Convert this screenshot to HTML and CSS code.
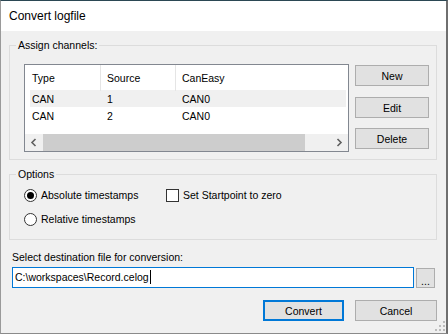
FILE: index.html
```html
<!DOCTYPE html>
<html lang="en">
<head>
<meta charset="UTF-8">
<meta name="viewport" content="width=device-width, initial-scale=1.0">
<title>Convert logfile</title>
<link rel="stylesheet" href="styles.css">
</head>
<body>
    <div class="window">
        <div class="titlebar">Convert logfile</div>

        <div class="content">
            <fieldset class="group">
                <legend>Assign channels:</legend>
                <div class="group-body channels">
                    <div class="listview">
                        <div class="lv-head">
                            <div class="cell c1">Type</div>
                            <div class="cell c2">Source</div>
                            <div class="cell c3">CanEasy</div>
                        </div>
                        <div class="lv-row hot">
                            <div class="cell c1">CAN</div>
                            <div class="cell c2">1</div>
                            <div class="cell c3">CAN0</div>
                        </div>
                        <div class="lv-row">
                            <div class="cell c1">CAN</div>
                            <div class="cell c2">2</div>
                            <div class="cell c3">CAN0</div>
                        </div>
                        <div class="lv-fill"></div>
                        <div class="hscroll">
                            <span class="sb-arrow">
                                <svg width="17" height="17" viewBox="0 0 17 17"><path d="M10.5 5 L7 8.5 L10.5 12" fill="none" stroke="#606060" stroke-width="1.6"/></svg>
                            </span>
                            <span class="sb-thumb"></span>
                            <span class="sb-track"></span>
                            <span class="sb-arrow">
                                <svg width="17" height="17" viewBox="0 0 17 17"><path d="M6.5 5 L10 8.5 L6.5 12" fill="none" stroke="#606060" stroke-width="1.6"/></svg>
                            </span>
                        </div>
                    </div>
                    <div class="side-buttons">
                        <button class="btn">New</button>
                        <button class="btn">Edit</button>
                        <button class="btn">Delete</button>
                    </div>
                </div>
            </fieldset>

            <fieldset class="group group-options">
                <legend>Options</legend>
                <div class="group-body options">
                    <label class="opt"><span class="radio checked"></span>Absolute timestamps</label>
                    <label class="opt"><span class="checkbox"></span>Set Startpoint to zero</label>
                    <label class="opt"><span class="radio"></span>Relative timestamps</label>
                </div>
            </fieldset>

            <div class="dest-label">Select destination file for conversion:</div>
            <div class="dest-row">
                <div class="textbox">C:\workspaces\Record.celog<span class="caret"></span></div>
                <button class="btn btn-browse">...</button>
            </div>

            <div class="footer">
                <button class="btn btn-default">Convert</button>
                <button class="btn btn-cancel">Cancel</button>
            </div>
        </div>

        <svg class="grip" width="10" height="10" viewBox="0 0 10 10">
            <rect x="8" y="0" width="2" height="2" fill="#bcbcbc"/>
            <rect x="4" y="4" width="2" height="2" fill="#bcbcbc"/>
            <rect x="8" y="4" width="2" height="2" fill="#bcbcbc"/>
            <rect x="0" y="8" width="2" height="2" fill="#bcbcbc"/>
            <rect x="4" y="8" width="2" height="2" fill="#bcbcbc"/>
            <rect x="8" y="8" width="2" height="2" fill="#bcbcbc"/>
        </svg>
    </div>
</body>
</html>
```

FILE: styles.css
```css
body {
    margin: 0;
    padding: 0;
    font-family: "Liberation Sans", Arial, sans-serif;
    font-size: 10.5px;
    color: #000;
    background-color: #f0f0f0;
}
.window {
    position: relative;
    width: 448px;
    height: 334px;
    box-sizing: border-box;
    background-color: #f0f0f0;
    border-top: 1px solid #2b4753;
    border-left: 1px solid #9a9a9a;
    border-right: 2px solid #6f6f6f;
    border-bottom: 1px solid #8a8a8a;
}
.titlebar {
    height: 30px;
    line-height: 31px;
    padding-left: 8px;
    background-color: #fff;
    font-size: 12px;
}
.content {
    padding: 0 9px 0 8px;
}
.group {
    margin: 7px 0 0 0;
    padding: 0;
    border: 1px solid #dcdcdc;
    min-width: 0;
}
.group legend {
    margin-left: 6px;
    padding: 0 2px;
    line-height: 14px;
}
.group-body {
    padding: 12px 7px 7px 14px;
}
.channels {
    display: flex;
    gap: 6px;
}
.listview {
    width: 323px;
    border: 1px solid #828790;
    background-color: #fff;
}
.lv-head, .lv-row {
    display: grid;
    grid-template-columns: 70px 75px 1fr;
    margin: 0 2px 0 5px;
}
.lv-head {
    height: 25px;
    line-height: 26px;
}
.lv-head .c2, .lv-head .c3 {
    border-left: 1px solid #e5e5e5;
    padding-left: 6px;
}
.lv-row {
    height: 17px;
    line-height: 18px;
}
.lv-row.hot {
    background-color: #f0f0f0;
}
.cell.c1 {
    padding-left: 2px;
}
.lv-row .c2, .lv-row .c3 {
    padding-left: 7px;
}
.lv-fill {
    height: 10px;
}
.hscroll {
    display: flex;
    height: 17px;
    background-color: #f0f0f0;
}
.sb-arrow {
    width: 17px;
    height: 17px;
}
.sb-arrow svg {
    display: block;
}
.sb-thumb {
    width: 262px;
    margin: 0 0 0 1px;
    background-color: #cdcdcd;
}
.sb-track {
    flex: 1;
}
.side-buttons {
    display: flex;
    flex-direction: column;
    gap: 10px;
    padding-top: 1px;
}
.btn {
    width: 74px;
    height: 21px;
    padding: 0;
    background-color: #e1e1e1;
    border: 1px solid #adadad;
    font-family: inherit;
    font-size: 10.5px;
    color: #000;
}
.side-buttons .btn:nth-child(2) {
    margin-top: 1px;
}
.options {
    display: grid;
    grid-template-columns: 142px auto;
    row-gap: 8px;
    padding: 6px 7px 12px 14px;
}
.opt {
    display: flex;
    align-items: center;
    height: 16px;
    gap: 4px;
}
.radio {
    width: 11px;
    height: 11px;
    border: 1px solid #333;
    border-radius: 50%;
    background-color: #fff;
    display: flex;
    align-items: center;
    justify-content: center;
}
.radio.checked::after {
    content: "";
    width: 7px;
    height: 7px;
    border-radius: 50%;
    background-color: #000;
}
.checkbox {
    width: 11px;
    height: 11px;
    border: 1px solid #333;
    background-color: #fff;
}
.dest-label {
    margin-top: 10px;
    padding-left: 3px;
    line-height: 14px;
}
.dest-row {
    display: flex;
    gap: 2px;
    margin-top: 3px;
    padding: 0 2px 0 3px;
}
.textbox {
    flex: 1;
    height: 19px;
    line-height: 19px;
    padding-left: 2px;
    border: 1px solid #0078d7;
    background-color: #fff;
}
.caret {
    display: inline-block;
    width: 1px;
    height: 14px;
    margin-left: 1px;
    vertical-align: -3px;
    background-color: #000;
}
.btn-browse {
    width: 19px;
    height: 20px;
    margin-top: 1px;
    line-height: 24px;
}
.footer {
    display: flex;
    justify-content: flex-end;
    gap: 11px;
    margin-top: 12px;
}
.btn-default {
    width: 81px;
    border: 2px solid #0078d7;
}
.btn-cancel {
    width: 82px;
}
.grip {
    position: absolute;
    right: 1px;
    bottom: 2px;
}
```
